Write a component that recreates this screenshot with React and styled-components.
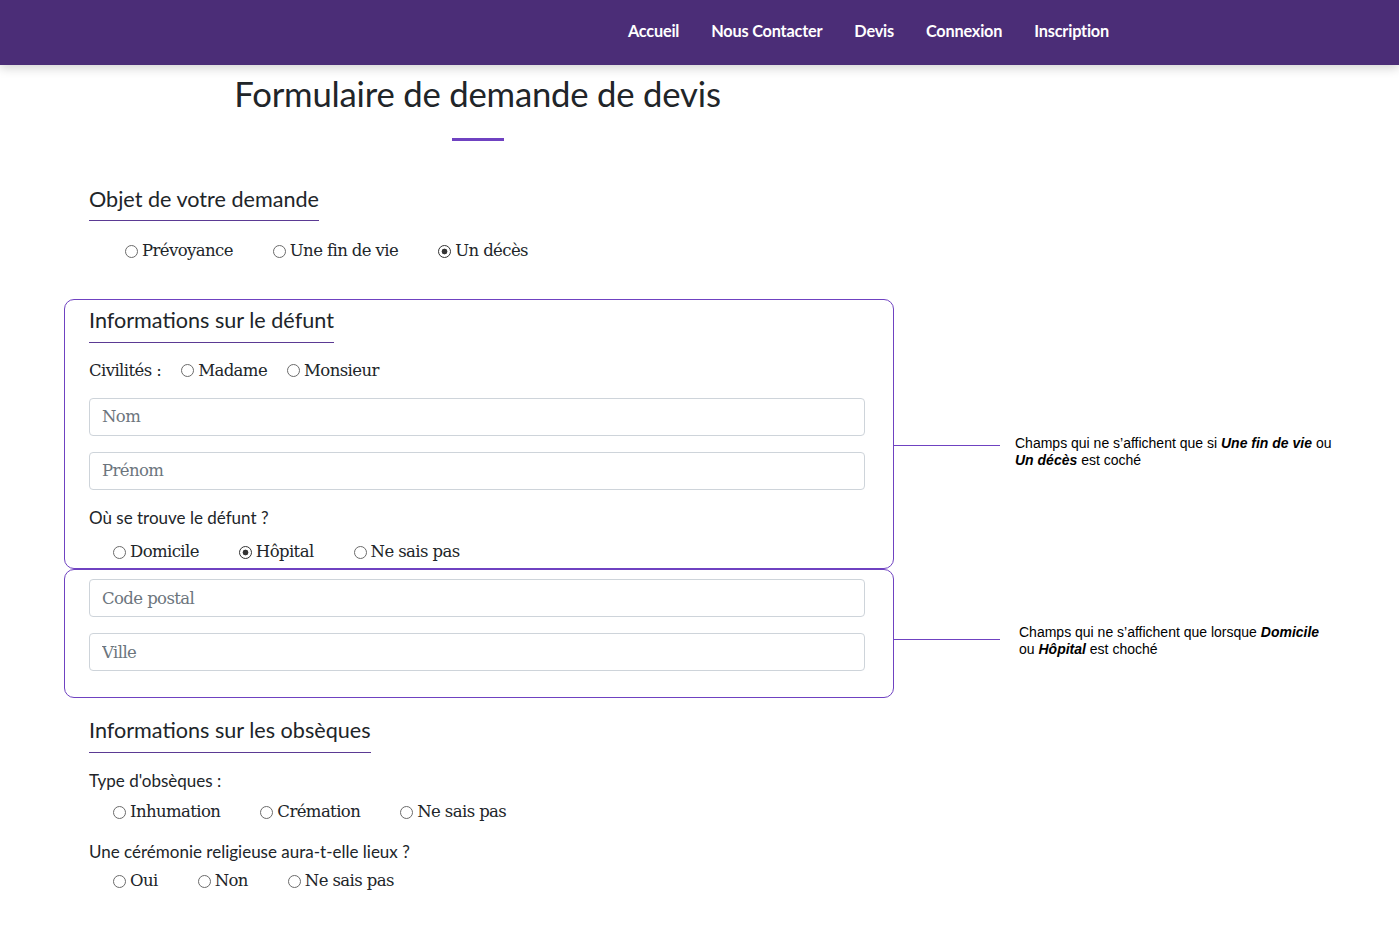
import React from 'react';
import styled, { createGlobalStyle } from 'styled-components';

const GlobalStyle = createGlobalStyle`
    * { box-sizing: border-box; }
    body {
        margin: 0;
        background: #fff;
        color: #212529;
        font-family: "DejaVu Serif", "Liberation Serif", serif;
    }
`

const Header = styled.header`
    height: 65px;
    background: #4b2d77;
    box-shadow: 0 3px 10px rgba(0, 0, 0, 0.18);
    display: flex;
    align-items: center;
    justify-content: flex-end;
    padding-right: 290px;
    position: relative;
    z-index: 1;
`
const Nav = styled.nav`
    display: flex;
    gap: 32px;
    margin-top: -5px;
`
const NavLink = styled.a`
    color: #fff;
    font-family: Lato, "Noto Sans", sans-serif;
    font-weight: 700;
    font-size: 16.3px;
    letter-spacing: -0.2px;
    text-decoration: none;
`
const Main = styled.main`
    width: 830px;
    margin-left: 64px;
    padding-bottom: 40px;
`
const TitleBlock = styled.div`
    display: flex;
    flex-direction: column;
    align-items: center;
    padding-top: 8px;
    padding-right: 3px;
`
const Title = styled.h1`
    margin: 0;
    font-family: Lato, "Noto Sans", sans-serif;
    font-weight: 400;
    font-size: 34.7px;
    line-height: 41px;
    letter-spacing: -0.2px;
    color: #212529;
`
const TitleBar = styled.div`
    width: 52px;
    height: 3px;
    background: #6f42c1;
    margin-top: 24px;
`
const Section = styled.section`
    padding: 0 25px;
    margin-top: ${p => p.$top || 0}px;
`
const Heading = styled.h2`
    display: inline-block;
    margin: 0;
    padding-bottom: 8px;
    border-bottom: 1px solid #5b3a94;
    font-family: Lato, "Noto Sans", sans-serif;
    font-weight: 400;
    font-size: 21.6px;
    line-height: 26.4px;
    color: #212529;
`
const Question = styled.div`
    font-family: Lato, "Noto Sans", sans-serif;
    font-size: 17px;
    line-height: 20.4px;
    margin-top: ${p => p.$top || 0}px;
`
const RadioRow = styled.div`
    display: flex;
    align-items: center;
    gap: ${p => p.$gap || 40}px;
    padding-left: ${p => p.$indent || 0}px;
    margin-top: ${p => p.$top || 0}px;
    font-size: 16.5px;
    letter-spacing: -0.6px;
    line-height: 24px;
`
const RadioLabel = styled.label`
    display: flex;
    align-items: center;
    gap: 4px;
    color: #212529;
`
const RadioInput = styled.input`
    appearance: none;
    width: 13px;
    height: 13px;
    margin: 0;
    border: 1px solid #6b6b6b;
    border-radius: 50%;
    background: #fff;
    &:checked {
        border-color: #333;
        background: radial-gradient(circle, #333 0 2.6px, #fff 3.2px);
    }
`
const FieldLabel = styled.span`
    margin-right: 0;
`
const BoxRow = styled.div`
    display: flex;
    align-items: flex-start;
    margin-top: ${p => p.$top || 0}px;
`
const Box = styled.div`
    flex: 0 0 830px;
    border: 1px solid #6f42c1;
    border-radius: 10px;
    padding: ${p => p.$pad};
`
const Input = styled.input`
    display: block;
    width: 100%;
    height: 38px;
    margin-top: ${p => p.$top || 0}px;
    padding: 0 12px;
    border: 1px solid #ced4da;
    border-radius: 4px;
    font-family: "DejaVu Serif", "Liberation Serif", serif;
    font-size: 16.5px;
    letter-spacing: -0.6px;
    color: #495057;
    &::placeholder { color: #6c757d; }
`
const Note = styled.div`
    display: flex;
    align-items: flex-start;
    margin-top: ${p => p.$top || 0}px;
`
const NoteLine = styled.div`
    width: 106px;
    height: 1px;
    background: #6f42c1;
    margin-top: ${p => p.$offset}px;
`
const NoteText = styled.p`
    margin: 0 0 0 ${p => p.$gap}px;
    font-family: "Liberation Sans", Arial, sans-serif;
    font-size: 14px;
    line-height: 17px;
    color: #000;
    white-space: nowrap;
    b { font-style: italic; }
`

const Radio = ({ name, label, checked }) => (
    <RadioLabel>
        <RadioInput type="radio" name={name} defaultChecked={checked} />
        {label}
    </RadioLabel>
)

export default function App() {
    return (<>
        <GlobalStyle />
        <Header>
            <Nav>
                {['Accueil', 'Nous Contacter', 'Devis', 'Connexion', 'Inscription'].map(l => (
                    <NavLink key={l} href="#">{l}</NavLink>
                ))}
            </Nav>
        </Header>
        <Main>
            <TitleBlock>
                <Title>Formulaire de demande de devis</Title>
                <TitleBar />
            </TitleBlock>

            <Section $top={45}>
                <Heading>Objet de votre demande</Heading>
                <RadioRow $indent={36} $top={18}>
                    <Radio name="objet" label="Prévoyance" />
                    <Radio name="objet" label="Une fin de vie" />
                    <Radio name="objet" label="Un décès" checked />
                </RadioRow>
            </Section>

            <BoxRow $top={36}>
                <Box $pad="7px 28px 4px 24px">
                    <Heading>Informations sur le défunt</Heading>
                    <RadioRow $gap={20} $top={16}>
                        <FieldLabel>Civilités :</FieldLabel>
                        <Radio name="civ" label="Madame" />
                        <Radio name="civ" label="Monsieur" />
                    </RadioRow>
                    <Input $top={15} placeholder="Nom" />
                    <Input $top={16} placeholder="Prénom" />
                    <Question $top={18}>Où se trouve le défunt ?</Question>
                    <RadioRow $indent={24} $top={12}>
                        <Radio name="lieu" label="Domicile" />
                        <Radio name="lieu" label="Hôpital" checked />
                        <Radio name="lieu" label="Ne sais pas" />
                    </RadioRow>
                </Box>
                <Note $top={136}>
                    <NoteLine $offset={10} />
                    <NoteText $gap={15}>
                        Champs qui ne s’affichent que si <b>Une fin de vie</b> ou<br />
                        <b>Un décès</b> est coché
                    </NoteText>
                </Note>
            </BoxRow>

            <BoxRow>
                <Box $pad="9px 28px 26px 24px">
                    <Input placeholder="Code postal" />
                    <Input $top={16} placeholder="Ville" />
                </Box>
                <Note $top={55}>
                    <NoteLine $offset={15} />
                    <NoteText $gap={19}>
                        Champs qui ne s’affichent que lorsque <b>Domicile</b><br />
                        ou <b>Hôpital</b> est choché
                    </NoteText>
                </Note>
            </BoxRow>

            <Section $top={19}>
                <Heading>Informations sur les obsèques</Heading>
                <Question $top={18}>Type d'obsèques :</Question>
                <RadioRow $indent={24} $top={9}>
                    <Radio name="type" label="Inhumation" />
                    <Radio name="type" label="Crémation" />
                    <Radio name="type" label="Ne sais pas" />
                </RadioRow>
                <Question $top={18}>Une cérémonie religieuse aura-t-elle lieux ?</Question>
                <RadioRow $indent={24} $top={7}>
                    <Radio name="ceremonie" label="Oui" />
                    <Radio name="ceremonie" label="Non" />
                    <Radio name="ceremonie" label="Ne sais pas" />
                </RadioRow>
            </Section>
        </Main>
    </>);
}
